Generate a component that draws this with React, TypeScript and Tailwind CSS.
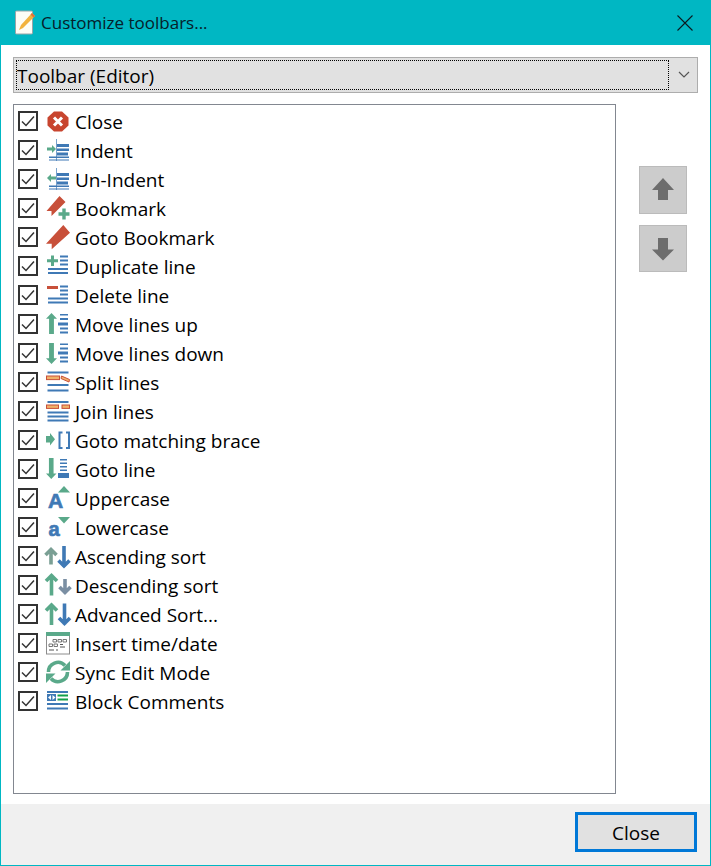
import React from "react";

const BLUE = "#3f79b5";
const GREEN = "#5aa98a";
const RED = "#c8503a";
const ORANGE = "#f0b26a";

// horizontal line helper for the editor glyphs
const Bar = ({ x, y, w, h = 2, c = BLUE }: { x: number; y: number; w: number; h?: number; c?: string }) => (
  <rect x={x} y={y} width={w} height={h} fill={c} />
);

const ArrowUp = ({ x, y, w, h, c }: { x: number; y: number; w: number; h: number; c: string }) => {
  const stem = w * 0.22;
  const mid = x + w / 2;
  const head = y + w * 0.52;
  return (
    <polygon
      fill={c}
      points={`${mid},${y} ${x + w},${head} ${mid + stem},${head} ${mid + stem},${y + h} ${mid - stem},${y + h} ${mid - stem},${head} ${x},${head}`}
    />
  );
};

const ArrowDown = ({ x, y, w, h, c }: { x: number; y: number; w: number; h: number; c: string }) => {
  const stem = w * 0.22;
  const mid = x + w / 2;
  const head = y + h - w * 0.52;
  return (
    <polygon
      fill={c}
      points={`${mid},${y + h} ${x + w},${head} ${mid + stem},${head} ${mid + stem},${y} ${mid - stem},${y} ${mid - stem},${head} ${x},${head}`}
    />
  );
};

// the sort icons use a thin stem with a swept head
const SortUp = ({ x, y, h, c }: { x: number; y: number; h: number; c: string }) => (
  <path d={`M${x} ${y + 1}V${y + h}M${x - 5.5} ${y + 7.5}L${x} ${y + 2}L${x + 5.5} ${y + 7.5}`} fill="none" stroke={c} strokeWidth="3.6" />
);

const SortDown = ({ x, y, h, c }: { x: number; y: number; h: number; c: string }) => (
  <path d={`M${x} ${y}V${y + h - 1}M${x - 5.5} ${y + h - 7.5}L${x} ${y + h - 2}L${x + 5.5} ${y + h - 7.5}`} fill="none" stroke={c} strokeWidth="3.6" />
);

const IndentLines = () => (
  <>
    <rect x="11" y="2" width="1" height="22" fill={BLUE} opacity="0.7" />
    <Bar x={12} y={7} w={12} h={3} />
    <Bar x={12} y={11.5} w={12} h={2.5} />
    <Bar x={12} y={15.5} w={11} h={3} />
    <Bar x={4} y={19.5} w={20} h={1.5} />
    <Bar x={4} y={22.5} w={20} h={1} />
  </>
);

const icons: Record<string, React.ReactNode> = {
  close: (
    <>
      <polygon fill="#c8452f" points="9,3.5 17,3.5 23.5,9.5 23.5,17.5 17,23.5 9,23.5 2.5,17.5 2.5,9.5" />
      <path d="M9 9.5l8 8M17 9.5l-8 8" stroke="#fff" strokeWidth="3" />
    </>
  ),
  indent: (
    <>
      <IndentLines />
      <polygon fill={GREEN} points="7,8 11,12 7,16 7,13.5 2,13.5 2,10.5 7,10.5" />
    </>
  ),
  unindent: (
    <>
      <IndentLines />
      <polygon fill={GREEN} points="6,8 2,12 6,16 6,13.5 11,13.5 11,10.5 6,10.5" />
    </>
  ),
  bookmark: (
    <>
      <polygon fill={RED} points="14.5,1 20.5,7 6.5,21 6.5,16 1.5,16" />
      <path d="M19 13.5v11M13.5 19h11" stroke={GREEN} strokeWidth="3.4" />
    </>
  ),
  gotoBookmark: <polygon fill={RED} points="18.3,1 25,8.7 6.7,25.3 6.7,19.7 1,19.7" />,
  duplicate: (
    <>
      <path d="M7.5 2.5v10.5M2 7.7h11" stroke={GREEN} strokeWidth="3" />
      <Bar x={15} y={2.5} w={8} />
      <Bar x={15} y={6.5} w={8} />
      <Bar x={15} y={10.5} w={8} />
      <Bar x={3} y={15} w={20} />
      <Bar x={3} y={19} w={20} />
    </>
  ),
  deleteLine: (
    <>
      <Bar x={2} y={4} w={11} h={3} c={RED} />
      <Bar x={15} y={3.5} w={8} />
      <Bar x={15} y={7.5} w={8} />
      <Bar x={15} y={11.5} w={8} />
      <Bar x={3} y={15.5} w={20} />
      <Bar x={3} y={19.5} w={20} />
    </>
  ),
  moveUp: (
    <>
      <ArrowUp x={1} y={2} w={11} h={21} c={GREEN} />
      <Bar x={15} y={3} w={8} h={1.5} />
      <Bar x={15} y={7} w={8} />
      <Bar x={13} y={11.5} w={10} h={3} />
      <Bar x={15} y={16.5} w={8} />
      <Bar x={15} y={20.5} w={8} />
    </>
  ),
  moveDown: (
    <>
      <ArrowDown x={1} y={3} w={11} h={21} c={GREEN} />
      <Bar x={15} y={3.5} w={8} h={1.5} />
      <Bar x={15} y={7.5} w={8} />
      <Bar x={13} y={11.5} w={10} h={3} />
      <Bar x={15} y={16.5} w={8} />
      <Bar x={15} y={20.5} w={8} />
    </>
  ),
  split: (
    <>
      <Bar x={2.5} y={2.5} w={21} />
      <rect x="1.5" y="7" width="13" height="3.6" fill={ORANGE} stroke={RED} strokeWidth="1" />
      <polygon fill={ORANGE} stroke={RED} strokeWidth="1" points="16.5,7 24.5,10.5 24,13 16,9.5" />
      <Bar x={2.5} y={15} w={21} />
      <Bar x={2.5} y={20.5} w={21} />
    </>
  ),
  join: (
    <>
      <Bar x={2.5} y={3} w={21} />
      <rect x="1.5" y="7" width="12" height="3.4" fill={ORANGE} stroke={RED} strokeWidth="1" />
      <rect x="17" y="7" width="7.5" height="3.4" fill={ORANGE} stroke={RED} strokeWidth="1" />
      <Bar x={2.5} y={13.5} w={21} />
      <Bar x={2.5} y={17.5} w={21} />
      <Bar x={2.5} y={21.5} w={21} />
    </>
  ),
  brace: (
    <>
      <polygon fill={GREEN} points="1,9 5,9 5,6 10,12.3 5,18.5 5,15.5 1,15.5" />
      <path d="M17.5 5.5h-3v15.5h3M21 5.5h3v15.5h-3" fill="none" stroke={BLUE} strokeWidth="2" />
    </>
  ),
  gotoLine: (
    <>
      <ArrowDown x={1} y={2} w={10.5} h={21} c={GREEN} />
      <Bar x={15} y={3} w={7} h={1.5} />
      <Bar x={15} y={6.5} w={7} h={1.5} />
      <Bar x={15} y={10} w={7} h={1.5} />
      <Bar x={15} y={13.5} w={7} h={1.5} />
      <Bar x={13} y={17} w={11} h={5} />
    </>
  ),
  upper: (
    <>
      <text x="10.5" y="22.5" textAnchor="middle" fontSize="21" fontWeight="700" fill={BLUE} stroke={BLUE} strokeWidth="0.7" fontFamily="'Liberation Sans', sans-serif">
        A
      </text>
      <polygon fill={GREEN} points="19,1 25,7.5 13,7.5" />
    </>
  ),
  lower: (
    <>
      <text x="9" y="22" textAnchor="middle" fontSize="20" fontWeight="700" fill={BLUE} stroke={BLUE} strokeWidth="0.7" fontFamily="'Liberation Sans', sans-serif">
        a
      </text>
      <polygon fill={GREEN} points="13,3 25,3 19,9.5" />
    </>
  ),
  ascending: (
    <>
      <SortUp x={6} y={4.5} h={17} c="#7a9f94" />
      <SortDown x={19} y={3} h={22} c={BLUE} />
    </>
  ),
  descending: (
    <>
      <SortUp x={6.5} y={1.5} h={22} c={GREEN} />
      <SortDown x={20} y={7} h={15.5} c="#7b8fa3" />
    </>
  ),
  advanced: (
    <>
      <SortUp x={6.5} y={2} h={22} c={GREEN} />
      <SortDown x={19.5} y={2.5} h={22} c={BLUE} />
    </>
  ),
  insertTime: (
    <>
      <rect x="1.5" y="2.5" width="23" height="21.5" fill="#fff" stroke="#8c8c8c" />
      <rect x="1" y="2" width="24" height="4" fill={GREEN} />
      <path
        d="M8 9.5h3.5v2.5h-3.5zM13 9.5h3.5v2.5h-3.5zM18 9.5h3.5v2.5h-3.5zM4 14h3.5v2.5h-3.5zM9 14h3.5v2.5h-3.5z"
        fill="none"
        stroke="#777"
        strokeWidth="1"
      />
      <path d="M4 20h5M11 20h2M15 14.5h3M15 17h5" stroke="#555" strokeWidth="1" />
    </>
  ),
  sync: (
    <>
      <path d="M3.5 13a9.5 9.5 0 0 1 16.5-6.5" fill="none" stroke={GREEN} strokeWidth="3.6" />
      <polygon fill={GREEN} points="25,2 25,11.5 15.5,11.5" />
      <path d="M22.5 13a9.5 9.5 0 0 1-16.5 6.5" fill="none" stroke={GREEN} strokeWidth="3.6" />
      <polygon fill={GREEN} points="1,24 1,14.5 10.5,14.5" />
    </>
  ),
  block: (
    <>
      <Bar x={2} y={3} w={21} h={2} />
      <rect x="2" y="6" width="9" height="7" fill={BLUE} />
      <polygon fill="#fff" points="3,9.5 6,7 6,12" />
      <polygon fill="#fff" points="10.5,9.5 7.5,7 7.5,12" />
      <Bar x={12.5} y={6.5} w={10.5} h={2} c="#14a04a" />
      <Bar x={12.5} y={10.5} w={10.5} h={2} c="#14a04a" />
      <Bar x={2} y={15} w={21} h={2} />
      <Bar x={2} y={19.5} w={21} h={2} />
    </>
  ),
};

const items = [
  ["close", "Close"],
  ["indent", "Indent"],
  ["unindent", "Un-Indent"],
  ["bookmark", "Bookmark"],
  ["gotoBookmark", "Goto Bookmark"],
  ["duplicate", "Duplicate line"],
  ["deleteLine", "Delete line"],
  ["moveUp", "Move lines up"],
  ["moveDown", "Move lines down"],
  ["split", "Split lines"],
  ["join", "Join lines"],
  ["brace", "Goto matching brace"],
  ["gotoLine", "Goto line"],
  ["upper", "Uppercase"],
  ["lower", "Lowercase"],
  ["ascending", "Ascending sort"],
  ["descending", "Descending sort"],
  ["advanced", "Advanced Sort..."],
  ["insertTime", "Insert time/date"],
  ["sync", "Sync Edit Mode"],
  ["block", "Block Comments"],
];

const CheckRow = ({ icon, label }: { icon: string; label: string }) => (
  <div className="flex h-[29px] items-center pl-1">
    <div className="flex h-5 w-5 items-center justify-center border-2 border-[#333333] bg-white">
      <svg width="14" height="12" viewBox="0 0 14 12">
        <path d="M1 6.5l4 4 8-9" fill="none" stroke="#333333" strokeWidth="1.5" />
      </svg>
    </div>
    <svg width="26" height="26" viewBox="0 0 26 26" className="ml-[7px] overflow-visible">
      {icons[icon]}
    </svg>
    <span className="ml-1 pt-[3px] text-[19px] leading-none text-black">{label}</span>
  </div>
);

const SideButton = ({ children, className }: { children: React.ReactNode; className: string }) => (
  <button className={`flex w-12 items-center justify-center border border-[#bbbbbb] bg-[#cccccc] ${className}`}>
    <svg width="24" height="24" viewBox="0 0 24 24">
      {children}
    </svg>
  </button>
);

export default function App() {
  return (
    <div
      className="flex h-[866px] w-[711px] flex-col border-x border-b border-[#00b7c3] bg-white"
      style={{ fontFamily: "'Open Sans', 'Noto Sans', sans-serif" }}
    >
      <div className="flex h-[45px] items-center bg-[#00b7c3] pl-[14px] pr-4">
        <svg width="22" height="25" viewBox="0 0 22 25">
          <rect x="0.5" y="1" width="17" height="23" rx="1" fill="#fdfdf6" stroke="#9aa5a8" />
          <polygon fill="#f2b33d" points="17,3 20,6 8,18 4,20 6,15" />
          <polygon fill="#e0703a" points="17,3 20,6 18.5,7.5 15.5,4.5" />
        </svg>
        <span className="ml-[4px] pt-px text-[17px] text-[#06202a]">Customize toolbars...</span>
        <svg width="16" height="16" viewBox="0 0 16 16" className="ml-auto mr-[1px]">
          <path d="M0.5 0.5l15 15M15.5 0.5l-15 15" stroke="#0b1a1f" strokeWidth="1.1" />
        </svg>
      </div>

      <div className="flex-1 px-3 pt-3">
        <div className="flex h-9 w-[685px] items-center border border-[#adadad] bg-[#e1e1e1] pl-[2px]">
          <div className="flex h-[30px] w-[653px] items-center border border-dotted border-black pt-[2px] text-[19px] text-black">
            Toolbar (Editor)
          </div>
          <svg width="12" height="8" viewBox="0 0 12 8" className="ml-[9px]">
            <path d="M1 1l5 5 5-5" fill="none" stroke="#555555" strokeWidth="1.2" />
          </svg>
        </div>

        <div className="mt-[11px] flex">
          <div className="h-[690px] w-[603px] border border-[#828790] bg-white pt-px">
            {items.map(([icon, label]) => (
              <CheckRow key={icon} icon={icon} label={label} />
            ))}
          </div>
          <div className="ml-[23px] flex flex-col gap-[11px] pt-[62px]">
            <SideButton className="h-12">
              <polygon fill="#6d6d6d" points="12,0 23,12 17,12 17,22 7,22 7,12 1,12" />
            </SideButton>
            <SideButton className="h-[47px]">
              <polygon fill="#6d6d6d" points="12,23.5 23,12.5 17,12.5 17,1 7,1 7,12.5 1,12.5" />
            </SideButton>
          </div>
        </div>
      </div>

      <div className="flex h-[61px] justify-end bg-[#f0f0f0] pr-[13px] pt-2">
        <button className="h-10 w-[122px] border-[3px] border-[#0078d7] bg-[#e1e1e1] pt-[3px] text-[19px] text-black">
          Close
        </button>
      </div>
    </div>
  );
}
